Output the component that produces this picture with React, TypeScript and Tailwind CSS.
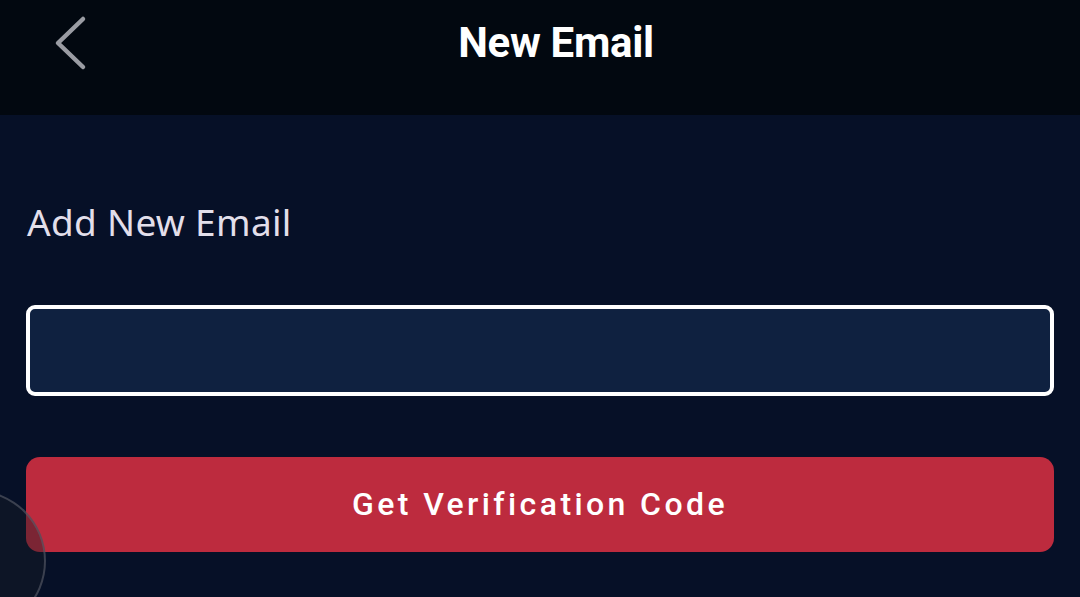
import React from "react";

export default function App() {
  return (
    <div className="relative w-[1080px] h-[597px] overflow-hidden bg-[#061027] flex flex-col" style={{ fontFamily: "Roboto, 'Noto Sans', sans-serif" }}>
      <div className="h-[115px] bg-[#020810] flex items-center relative shrink-0">
        <svg className="absolute left-[50px] top-[14px]" width="40" height="58" viewBox="0 0 40 58">
          <polyline points="33,5 8,29 33,53" fill="none" stroke="#9a9ca3" strokeWidth="4.5" strokeLinecap="round" strokeLinejoin="round" />
        </svg>
        <div className="w-full text-center text-white font-bold text-[42px] leading-none -mt-[30px] pl-[32px] tracking-[-0.3px]">New Email</div>
      </div>
      <div className="px-[26px] flex flex-col">
        <div className="mt-[88px] text-[37px] leading-none text-[#e2dfea] pl-[1px] tracking-[0.3px]" style={{ fontFamily: "'Noto Sans', sans-serif" }}>Add New Email</div>
        <div className="mt-[65px] h-[91px] rounded-[9px] border-[4px] border-white bg-[#0f2140]"></div>
        <button className="mt-[61px] h-[95px] rounded-[14px] bg-[#bd2b3e] text-white text-[32px] font-medium tracking-[3.4px] flex items-center justify-center pb-[2px]">
          Get Verification Code
        </button>
      </div>
      <div className="absolute left-[-96px] top-[490px] w-[142px] h-[142px] rounded-full border-[2px] border-[#5a5f6a]/60 bg-[#1a1f26]/40"></div>
    </div>
  );
}
